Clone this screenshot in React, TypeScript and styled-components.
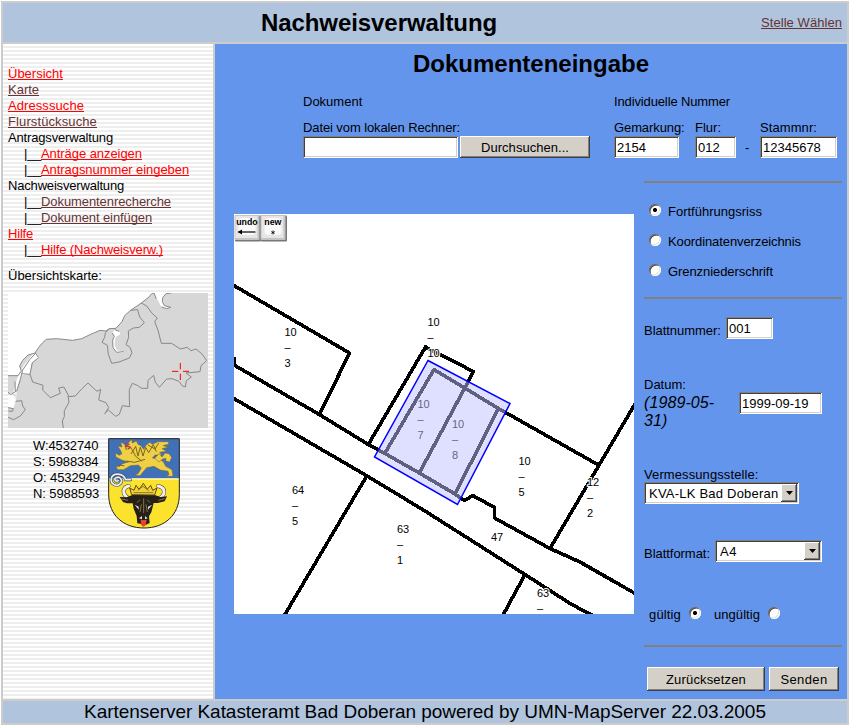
import React from 'react';
import styled, { createGlobalStyle, css } from 'styled-components';

const Global = createGlobalStyle`
  * { box-sizing: border-box; }
  body { margin: 0; background: #fff; color: #000; font: 13px/15px "Liberation Sans", Arial, sans-serif; }
  input, select, button { font: inherit; color: inherit; margin: 0; padding: 0; border: 0; border-radius: 0; outline: 0; }
`;

/* ---------- page frame ---------- */
const Frame = styled.div`
  width: 848px;
  height: 724px;
  margin: 1px 0 0 1px;
  display: grid;
  grid-template-columns: 210px 632px;
  grid-template-rows: 39px 655px 22px;
  gap: 2px;
  padding: 2px;
  background: #ccc;
`;
const Header = styled.header`
  grid-column: 1 / -1;
  display: flex;
  background: #b0c4de;
`;
const PageTitle = styled.h1`
  width: 752px;
  margin: 0;
  padding-top: 6px;
  text-align: center;
  font-size: 24px;
  line-height: 27px;
  letter-spacing: -0.07px;
`;
const Footer = styled.footer`
  grid-column: 1 / -1;
  background: #b0c4de;
  text-align: center;
  font-size: 19px;
  line-height: 22px;
  letter-spacing: -0.05px;
  white-space: nowrap;
`;
const Sidebar = styled.aside`
  padding: 22px 5px 0;
  background: repeating-linear-gradient(#fff 0 2px, #eee 2px 4px);
`;
const Main = styled.main`
  background: #6495ed;
`;

/* ---------- text ---------- */
const Text = styled.span<{ $ls?: number }>`
  white-space: nowrap;
  letter-spacing: ${p => p.$ls ?? 0}px;
`;
const Link = styled.a<{ $active?: boolean; $ls?: number }>`
  color: ${p => (p.$active ? '#f00' : '#633')};
  letter-spacing: ${p => p.$ls ?? 0}px;
  text-decoration: underline;
  text-decoration-thickness: 1px;
  text-underline-offset: 1px;
  text-decoration-skip-ink: none;
  white-space: nowrap;
`;
const SwitchOffice = styled(Link)`
  margin: 12px 0 0 6px;
`;

/* ---------- sidebar ---------- */
const NavList = styled.ul`
  margin: 0;
  padding: 0;
  list-style: none;
  line-height: 16px;
`;
const NavItem = styled.li<{ $sub?: boolean }>`
  height: 16px;
  padding-left: ${p => (p.$sub ? 16 : 0)}px;
  display: flex;
`;
const Branch = styled.span`
  width: 17px;
  letter-spacing: -0.25px;
`;
const OverviewLabel = styled.div`
  margin: 10px 0;
`;
const Overview = styled.svg`
  display: block;
`;
const Extent = styled.div`
  display: flex;
  margin: 10px 0 0 25px;
  gap: 9px;
`;
const Coordinates = styled.div`
  width: 66px;
  line-height: 16px;
  letter-spacing: -0.1px;
  white-space: nowrap;
`;

/* ---------- form controls ---------- */
const sunken = css`
  background: #fff;
  box-shadow: inset 1px 1px #808080, inset -1px -1px #fff, inset 2px 2px #404040, inset -2px -2px #d4d0c8;
`;
const raised = css`
  background: #d4d0c8;
  box-shadow: inset -1px -1px #404040, inset 1px 1px #fff, inset -2px -2px #808080;
`;
const Field = styled.input<{ $w: number }>`
  display: block;
  width: ${p => p.$w}px;
  height: 22px;
  padding: 1px 3px 0;
  ${sunken}
`;
const Button = styled.button<{ $w: number; $h?: number; $ls?: number }>`
  width: ${p => p.$w}px;
  height: ${p => p.$h ?? 22}px;
  letter-spacing: ${p => p.$ls ?? 0}px;
  ${raised}
`;
const Radio = styled.input`
  appearance: none;
  width: 12px;
  height: 12px;
  flex: none;
  border-radius: 50%;
  background: #fff;
  box-shadow: inset 1px 1px #707070, inset -1px -1px #fff, inset 1.5px 1.5px #404040, inset -1.5px -1.5px #d4d0c8;
  &:checked { background: radial-gradient(circle, #000 0 1.8px, #fff 2.3px); }
`;
const SelectBox = styled.div<{ $w: number }>`
  display: flex;
  width: ${p => p.$w}px;
  height: 22px;
  padding: 2px;
  ${sunken}
`;
const SelectControl = styled.select<{ $ls: number }>`
  appearance: none;
  flex: 1;
  padding-left: 3px;
  letter-spacing: ${p => p.$ls}px;
  background: #fff;
`;
const SelectArrow = styled.span`
  width: 16px;
  display: grid;
  place-items: center;
  ${raised}
`;
const Rule = styled.hr`
  width: 198px;
  height: 2px;
  margin: 0;
  border: 0;
  background: #808080;
`;

/* ---------- document form ---------- */
const FormTitle = styled.h2`
  margin: 0;
  padding-top: 6px;
  height: 50px;
  text-align: center;
  font-size: 24px;
  line-height: 27px;
`;
const TopRow = styled.div`
  display: flex;
  padding-left: 88px;
  height: 87px;
`;
const DocumentGroup = styled.section`
  width: 311px;
`;
const GroupLabel = styled.div<{ $ls?: number }>`
  height: 26px;
  letter-spacing: ${p => p.$ls ?? 0}px;
`;
const Labeled = styled.label`
  display: flex;
  flex-direction: column;
  gap: 1px;
`;
const FileRow = styled.div`
  display: flex;
  gap: 2px;
  margin-top: 1px;
`;
const NumberRow = styled.div`
  display: grid;
  grid-template-columns: 81px 50px 15px 77px;
`;
const Dash = styled.span`
  padding-top: 20px;
`;
const Body = styled.div`
  display: flex;
  gap: 10px;
  padding-left: 19px;
`;
const MapPane = styled.div`
  width: 400px;
  height: 400px;
  margin-top: 33px;
  background: #fff;
`;
const Options = styled.section`
  width: 198px;
`;
const RadioList = styled.div`
  display: flex;
  flex-direction: column;
  gap: 15px;
  padding: 21px 0 18px 5px;
`;
const RadioRow = styled.label`
  display: flex;
  height: 15px;
  gap: 7px;
`;
const SheetNumber = styled.label`
  display: flex;
  gap: 5px;
  padding-top: 18px;
  height: 78px;
  & > span { padding-top: 6px; width: 77px; }
`;
const DateRow = styled.label`
  display: flex;
  height: 90px;
`;
const DateLabel = styled.div`
  width: 95px;
`;
const DateHint = styled.em`
  display: block;
  font-size: 16px;
  line-height: 18px;
  letter-spacing: 0.1px;
  width: 74px;
  margin-top: 2px;
`;
const DateField = styled(Field)`
  margin-top: 15px;
`;
const Office = styled(Labeled)`
  gap: 0;
  height: 73px;
`;
const FormatRow = styled.label`
  display: flex;
  gap: 5px;
  height: 67px;
  & > span { width: 66px; padding-top: 6px; }
`;
const ValidRow = styled.div`
  display: flex;
  padding-left: 5px;
  height: 38px;
`;
const ValidChoice = styled.label<{ $w: number }>`
  display: flex;
  width: ${p => p.$w}px;
  gap: 8px;
`;
const Actions = styled.div`
  display: flex;
  gap: 4px;
  padding: 20px 0 0 3px;
`;

/* ---------- cadastral map ---------- */
const Parcel = styled.g`
  fill: none;
  stroke: #000;
  stroke-width: 3.6;
  stroke-linejoin: round;
  shape-rendering: crispEdges;
`;
const MapText = styled.text`
  font: 11px "Liberation Sans", Arial, sans-serif;
  fill: #000;
  stroke: #fff;
  stroke-width: 2px;
  paint-order: stroke;
`;
const ToolText = styled.text`
  font: bold 8.8px "Liberation Sans", Arial, sans-serif;
`;

const parcelLabels: [number, number, string, string?][] = [
  [284.5, 336, '10', '3'],
  [427.5, 326, '10', '10'],
  [417.5, 408, '10', '7'],
  [452, 428, '10', '8'],
  [518.5, 465, '10', '5'],
  [587, 486, '12', '2'],
  [292, 494, '64', '5'],
  [397, 533, '63', '1'],
  [537, 597, '63', ''],
  [491, 541, '47'],
];

const MapTool = ({ x, label, children }: { x: number; label: string; children: React.ReactNode }) => (
  <g transform={`translate(${x} 215)`}>
    <rect x="0.5" y="0.5" width="26" height="26" rx="1" fill="#777" />
    <rect width="25" height="25" rx="1" fill="#c4c4c4" />
    <rect x="1" y="1" width="22" height="22" fill="#e6e6e6" />
    <rect x="4" y="3" width="17" height="17" rx="4" fill="#fafafa" />
    <ToolText x="12.4" y="10" textAnchor="middle">{label}</ToolText>
    {children}
  </g>
);

const CadastralMap = () => (
  <svg width="400" height="400" viewBox="234 214 400 400" display="block">
    <Parcel>
      <path d="M233 285L349.500 353L319.500 414.500" />
      <path d="M234 357V365L319.300 414.500L368.300 444.500L385 453.500L419.300 473L455 494L464.500 500.500L472.700 495.500L494.500 507.500V518L550 548.500L580 562L636 594" />
      <path d="M233 398L366.700 475.700L425 511L525 574.500L571.700 604.500L592 615" />
      <path d="M366.700 476L284 616M525 574.500L502.500 616" />
      <path d="M368.300 444.500L425.500 347L473.300 371.500L468 382L419.300 473" />
      <path d="M385 453L434 369.500L498.500 408.500L455 494M498.500 408.500L598.500 465M635 404L550 548.500" />
    </Parcel>
    {parcelLabels.map(([x, y, top, bottom], i) => (
      <g key={i}>
        <MapText x={x} y={y}>{top}</MapText>
        {bottom !== undefined && <MapText x={x} y={y + 15}>–</MapText>}
        {bottom && <MapText x={x} y={y + 31}>{bottom}</MapText>}
      </g>
    ))}
    <path d="M428 360.500L510 403.500L457.500 504.500L374.500 457Z" fill="#c0c0ff" fillOpacity=".5" stroke="#00f" strokeWidth="1.5" />
    <MapTool x={234.5} label="undo">
      <path d="M4 17H21" stroke="#000" strokeWidth="1.2" />
      <path d="M3 17L7.500 14.500V19.500Z" />
    </MapTool>
    <MapTool x={260.5} label="new">
      <path d="M12.500 15.500V19.500M10.800 16.500L14.200 18.500M14.200 16.500L10.800 18.500" stroke="#000" strokeWidth=".8" />
    </MapTool>
  </svg>
);

const OverviewMap = () => (
  <Overview width="200" height="135" viewBox="24 24 600 405">
    <rect x="24" y="24" width="600" height="405" fill="#fff" />
    <path fill="#d7d7d7" d="M624 24H514L498 26L488 38L487 50L493 62L512 67L500 71L484 66L478 55L474 46L469 42L462 24L455 26L447 36L424 54L392 76L374 92L366 110L348 130L328 131L318 138L300 136L245 161L218 166L170 161L139 163L128 173L116 187L105 204L84 210L68 226L59 243L64 258L54 272H24V372L28 364L47 350V322L53 299L65 266L90 268V429H624ZM90 268L97 233L116 218L112 207L100 209L88 228L72 251L66 264Z" />
    <path fill="#d7d7d7" d="M24 366L40 370L48 347L50 318L59 287L68 268H90L95 429H24Z" />
    <path fill="#fff" d="M100 206L112 208L118 220L95 233L91 266L66 271L62 258L72 240ZM66 262L56 291L47 327L34 328L46 336L47 348L38 359L24 368V330L40 322L47 294L57 266ZM344 134L358 139L361 148L348 155L345 166L344 181L351 196L371 200L367 204L350 202L339 188L338 165L343 154L337 144Z" />
    <g fill="none" stroke="#888" strokeWidth="3" strokeLinejoin="round">
      <path d="M462 24L455 26L447 36L424 54L392 76L374 92L366 110L348 130L328 131L318 138L300 136L270 149L245 161L218 166L170 161L139 163L128 173L116 187L105 204L84 210L68 226L59 243L64 258L54 272H24M462 24L469 42M488 38L487 50L493 62L512 67L500 71L484 66M514 24L498 26L488 38" />
      <path d="M328 131L316 144L314 157L306 172L322 181L325 208L335 235L357 231L388 219L396 203L390 187L378 179L386 157L385 138L400 129L418 127L433 113L419 96L413 74L390 76" />
      <path d="M344 134L358 139M337 144L343 154L338 165L339 188L350 202L371 200M424 54L440 63L456 85L472 99L464 110L474 136L484 175L515 175L541 192L562 187L573 197L588 192L607 208L620 227L603 242L600 260L558 264L574 276L559 287L556 306L546 302L537 289L516 281L500 282L478 307L466 292L461 271L444 286L443 310L425 310L412 301L397 295L388 314V343L389 365L367 362L358 388L347 394L325 375L314 386L326 368L318 353L296 345L302 313L291 319L264 294L246 311L226 333L207 335L192 306L176 309L181 325L151 338L128 315L129 301L98 291L90 268L97 233L116 218L107 205" />
      <path d="M204 333L207 352L193 377V395L187 408L190 429M107 205L89 224L68 255L61 284L50 318L31 329L24 321M47 349L65 347L68 363L76 374L61 393L41 404L24 397M65 266L90 268M45 290L46 320M24 368L40 371L37 379L25 378" />
    </g>
    <path d="M541 234V253M541 266V285M516 259H535M549 259H567" stroke="#f00" strokeWidth="3" />
  </Overview>
);

const CoatOfArms = () => (
  <svg width="72" height="91" viewBox="264 24 216 273">
    <path d="M266 26H478V193C478 255 434 294 372 294C310 294 266 255 266 193Z" fill="#fae22d" />
    <path d="M266 26H478V145H266Z" fill="#3f70b8" />
    <path d="M266 147H478" stroke="#fff" strokeWidth="3" />
    <path d="M266 26H478V193C478 255 434 294 372 294C310 294 266 255 266 193Z" fill="none" stroke="#222" strokeWidth="3" />
    <g fill="#efd044" stroke="#6c6030" strokeWidth="1.500" strokeLinejoin="round">
      <path d="M318 49L327 37L335 28L337 39L349 33L354 43L363 47L371 58L378 46L389 37L397 43L414 35L444 35L447 42L429 47L445 51L426 56L440 64L419 67L426 75L405 75L397 84L416 86L430 95L437 109L456 119L459 139H438L447 134L444 124L421 120L402 109L380 113L369 126L360 137L345 136L355 130L364 114L355 105L331 107L311 119L293 119L288 108L298 110L307 101L326 96L307 91L288 81L286 69L298 76L306 71L301 60L293 48L306 51L302 36L314 43L319 60Z" />
      <path d="M404 84L418 71L426 81L435 69L447 71L455 82L449 96L437 93L438 85L428 87L417 96Z" />
    </g>
    <path d="M333 72L347 49L354 78L361 51L369 78L377 52L386 68L400 44L409 65M326 48L336 58L347 79L365 93M384 45L405 57L416 39M319 93L344 97L375 88M297 104L313 108" fill="none" stroke="#786622" strokeWidth="3" />
    <path d="M315 39L326 43L318 48L331 52L323 58" fill="none" stroke="#b83a48" strokeWidth="4" />
    <g fill="none" strokeLinecap="round">
      <path d="M332 149H317C309 127 278 128 274 145C270 162 290 172 301 161C311 151 299 138 288 143C280 147 287 157 295 152" stroke="#334b6d" strokeWidth="9" />
      <path d="M332 149H317C309 127 278 128 274 145C270 162 290 172 301 161C311 151 299 138 288 143C280 147 287 157 295 152" stroke="#eee" strokeWidth="5" />
      <path d="M326 168C307 173 305 193 326 205M414 168C437 173 438 193 418 205" stroke="#443b33" strokeWidth="12" />
      <path d="M326 168C307 173 305 193 326 205M414 168C437 173 438 193 418 205" stroke="#f4f0e8" strokeWidth="9" />
    </g>
    <path d="M299 201L320 202L339 194H402L421 201L441 199L434 214L413 219L401 219L394 247L387 259L389 279L378 284L352 280L350 258L341 236L338 220L321 220L309 216Z" fill="#252018" />
    <path d="M335 194L329 174L342 181L348 166L357 178L370 160L382 178L392 166L398 181L411 174L404 195Z" fill="#f1d338" stroke="#5b4c19" strokeWidth="3" />
    <path d="M341 188H400M353 181L369 169L386 182" fill="none" stroke="#8b7524" strokeWidth="3" />
    <path d="M344 224L356 230V239ZM397 224L384 230V239ZM357 265L366 258V268ZM383 265L375 258V268Z" fill="#ddd" />
    <path d="M360 209L351 218M381 209L390 218M364 223L360 246M378 223L382 246M371 205V249M305 207L324 211M434 206L415 211" stroke="#897447" strokeWidth="3" />
    <path d="M362 270H380L377 286L370 291L363 284Z" fill="#e74236" />
  </svg>
);

type Nav = { text: string; kind: 'plain' | 'active' | 'visited'; sub?: boolean; ls?: number };
const nav: Nav[] = [
  { text: 'Übersicht', kind: 'active' },
  { text: 'Karte', kind: 'visited' },
  { text: 'Adresssuche', kind: 'active', ls: 0.08 },
  { text: 'Flurstücksuche', kind: 'visited', ls: 0.11 },
  { text: 'Antragsverwaltung', kind: 'plain', ls: -0.16 },
  { text: 'Anträge anzeigen', kind: 'active', sub: true, ls: -0.06 },
  { text: 'Antragsnummer eingeben', kind: 'active', sub: true, ls: -0.07 },
  { text: 'Nachweisverwaltung', kind: 'plain', ls: -0.18 },
  { text: 'Dokumentenrecherche', kind: 'visited', sub: true, ls: -0.08 },
  { text: 'Dokument einfügen', kind: 'visited', sub: true, ls: -0.1 },
  { text: 'Hilfe', kind: 'active', ls: -0.2 },
  { text: 'Hilfe (Nachweisverw.)', kind: 'active', sub: true, ls: -0.14 },
];

const Select = ({ w, value, ls }: { w: number; value: string; ls: number }) => (
  <SelectBox $w={w}>
    <SelectControl $ls={ls} defaultValue={value}>
      <option>{value}</option>
    </SelectControl>
    <SelectArrow>
      <svg width="7" height="4" viewBox="0 0 7 4" display="block"><path d="M0 0H7L3.500 4Z" /></svg>
    </SelectArrow>
  </SelectBox>
);

export default function App() {
  return (
    <>
      <Global />
      <Frame>
        <Header>
          <PageTitle>Nachweisverwaltung</PageTitle>
          <SwitchOffice $ls={0.06}>Stelle Wählen</SwitchOffice>
        </Header>
        <Sidebar>
          <NavList>
            {nav.map(n => (
              <NavItem key={n.text} $sub={n.sub}>
                {n.sub && <Branch>|__</Branch>}
                {n.kind === 'plain'
                  ? <Text $ls={n.ls}>{n.text}</Text>
                  : <Link $active={n.kind === 'active'} $ls={n.ls}>{n.text}</Link>}
              </NavItem>
            ))}
          </NavList>
          <OverviewLabel>Übersichtskarte:</OverviewLabel>
          <OverviewMap />
          <Extent>
            <Coordinates>
              <div>W:4532740</div>
              <div>S: 5988384</div>
              <div>O: 4532949</div>
              <div>N: 5988593</div>
            </Coordinates>
            <CoatOfArms />
          </Extent>
        </Sidebar>
        <Main>
          <FormTitle>Dokumenteneingabe</FormTitle>
          <TopRow>
            <DocumentGroup>
              <GroupLabel>Dokument</GroupLabel>
              <Text as="div" $ls={-0.1}>Datei vom lokalen Rechner:</Text>
              <FileRow>
                <Field $w={155} />
                <Button $w={130} $ls={0.04}>Durchsuchen...</Button>
              </FileRow>
            </DocumentGroup>
            <section>
              <GroupLabel $ls={-0.13}>Individuelle Nummer</GroupLabel>
              <NumberRow>
                <Labeled><Text $ls={-0.1}>Gemarkung:</Text><Field $w={65} defaultValue="2154" /></Labeled>
                <Labeled><Text>Flur:</Text><Field $w={41} defaultValue="012" /></Labeled>
                <Dash>-</Dash>
                <Labeled><Text $ls={0.08}>Stammnr:</Text><Field $w={77} defaultValue="12345678" /></Labeled>
              </NumberRow>
            </section>
          </TopRow>
          <Body>
            <MapPane><CadastralMap /></MapPane>
            <Options>
              <Rule />
              <RadioList>
                <RadioRow><Radio type="radio" name="type" defaultChecked /><Text>Fortführungsriss</Text></RadioRow>
                <RadioRow><Radio type="radio" name="type" /><Text $ls={-0.1}>Koordinatenverzeichnis</Text></RadioRow>
                <RadioRow><Radio type="radio" name="type" /><Text $ls={-0.07}>Grenzniederschrift</Text></RadioRow>
              </RadioList>
              <Rule />
              <SheetNumber><Text $ls={-0.03}>Blattnummer:</Text><Field $w={47} defaultValue="001" /></SheetNumber>
              <DateRow>
                <DateLabel>Datum:<DateHint>(1989-05-31)</DateHint></DateLabel>
                <DateField $w={83} defaultValue="1999-09-19" />
              </DateRow>
              <Office>
                <Text $ls={0.1}>Vermessungsstelle:</Text>
                <Select w={155} value="KVA-LK Bad Doberan" ls={0.22} />
              </Office>
              <FormatRow><Text $ls={-0.04}>Blattformat:</Text><Select w={107} value="A4" ls={0.5} /></FormatRow>
              <ValidRow>
                <ValidChoice $w={65}><Text $ls={0.15}>gültig</Text><Radio type="radio" name="valid" defaultChecked /></ValidChoice>
                <ValidChoice $w={67}><Text $ls={0.06}>ungültig</Text><Radio type="radio" name="valid" /></ValidChoice>
              </ValidRow>
              <Rule />
              <Actions>
                <Button $w={118} $h={24} $ls={0.16}>Zurücksetzen</Button>
                <Button $w={70} $h={24} $ls={0.4}>Senden</Button>
              </Actions>
            </Options>
          </Body>
        </Main>
        <Footer>Kartenserver Katasteramt Bad Doberan powered by UMN-MapServer 22.03.2005</Footer>
      </Frame>
    </>
  );
}
